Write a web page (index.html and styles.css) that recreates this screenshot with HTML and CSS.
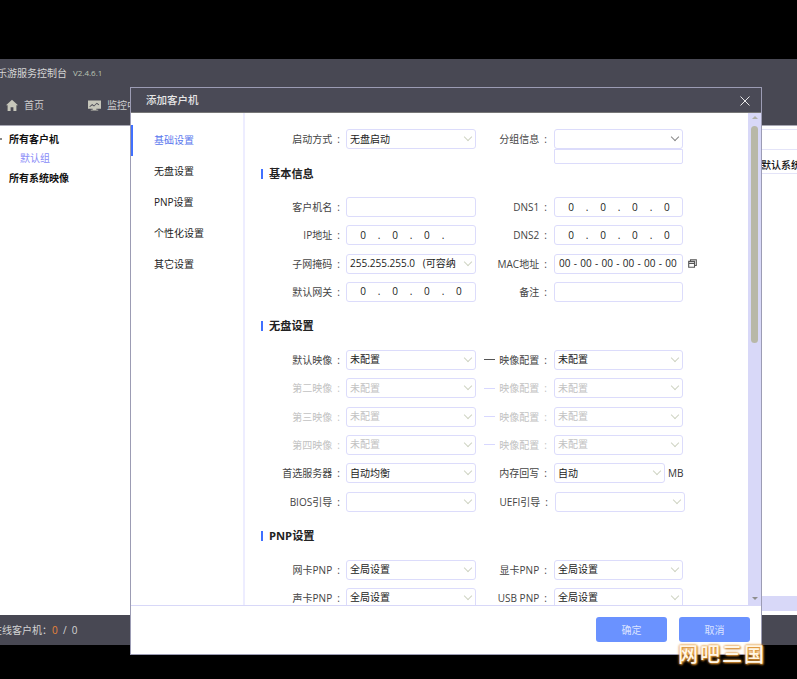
FILE: index.html
```html
<!DOCTYPE html>
<html lang="zh">
<head>
<meta charset="utf-8">
<title>乐游服务控制台</title>
<link rel="stylesheet" href="styles.css">
</head>
<body>
<div class="app">
  <div class="titlebar"><span class="app-name">乐游服务控制台</span><span class="version">V2.4.6.1</span></div>
  <nav class="nav">
    <span class="nav-item">
      <svg class="nav-icon" viewBox="0 0 12 12"><path d="M6 .8 0 6.2h1.6V12h3V8.2h2.8V12h3V6.2H12z"/></svg>首页
    </span>
    <span class="nav-item nav-second">
      <svg class="nav-icon wide" viewBox="0 0 14 11"><path fill-rule="evenodd" d="M0 0h14v9H9v1h2v1H3v-1h2V9H0zm1.5 6.5 3-2.5 2 1.5 3-3 2.5 2-.6.7-1.9-1.5-3 3-2-1.5-2.4 2z"/></svg>监控中心
    </span>
  </nav>
  <main class="work">
    <aside class="tree">
      <div class="tree-root"><span class="tree-caret"></span>所有客户机</div>
      <div class="tree-child">默认组</div>
      <div class="tree-root">所有系统映像</div>
    </aside>
    <section class="behind">
      <div class="behind-row"></div>
      <div class="behind-row tall">默认系统</div>
      <div class="behind-strip"></div>
    </section>
  </main>
  <footer class="status">在线客户机：<span class="count">0</span>&nbsp;&nbsp;/&nbsp;&nbsp;0</footer>
</div>

<div class="modal">
  <header class="modal-head">
    <span>添加客户机</span>
    <svg class="close" viewBox="0 0 10 10"><path d="M.5.5l9 9M9.5.5l-9 9"/></svg>
  </header>
  <div class="modal-body">
    <ul class="side">
      <li class="active">基础设置</li>
      <li>无盘设置</li>
      <li>PNP设置</li>
      <li>个性化设置</li>
      <li>其它设置</li>
    </ul>
    <div class="content">
      <div class="form">
        <div class="row top-row">
          <label class="lab1">启动方式&nbsp;&nbsp;:</label>
          <div class="field select w130">无盘启动</div>
          <label class="lab2">分组信息&nbsp;&nbsp;:</label>
          <div class="stack">
            <div class="field select strong w129"></div>
            <div class="field sub w129"></div>
          </div>
        </div>
        <h3 class="head first">基本信息</h3>
        <div class="row">
          <label class="lab1">客户机名&nbsp;&nbsp;:</label>
          <div class="field w130"></div>
          <label class="lab2">DNS1&nbsp;&nbsp;:</label>
          <div class="field ip w129"><i>0</i><b>.</b><i>0</i><b>.</b><i>0</i><b>.</b><i>0</i></div>
        </div>
        <div class="row">
          <label class="lab1">IP地址&nbsp;&nbsp;:</label>
          <div class="field ip w130"><i>0</i><b>.</b><i>0</i><b>.</b><i>0</i><b>.</b><i></i></div>
          <label class="lab2">DNS2&nbsp;&nbsp;:</label>
          <div class="field ip w129"><i>0</i><b>.</b><i>0</i><b>.</b><i>0</i><b>.</b><i>0</i></div>
        </div>
        <div class="row">
          <label class="lab1">子网掩码&nbsp;&nbsp;:</label>
          <div class="field select w130">255.255.255.0&nbsp;&nbsp;&nbsp;(可容纳</div>
          <label class="lab2">MAC地址&nbsp;&nbsp;:</label>
          <div class="field mac w129">00 - 00 - 00 - 00 - 00 - 00</div>
          <svg class="copy" viewBox="0 0 9 9"><path d="M2.5 2V.7h5.8v5.8H7M.7 2.4h5.8v5.9H.7zM.7 4.4h5.8"/></svg>
        </div>
        <div class="row">
          <label class="lab1">默认网关&nbsp;&nbsp;:</label>
          <div class="field ip w130"><i>0</i><b>.</b><i>0</i><b>.</b><i>0</i><b>.</b><i>0</i></div>
          <label class="lab2">备注&nbsp;&nbsp;:</label>
          <div class="field w129"></div>
        </div>
        <h3 class="head">无盘设置</h3>
        <div class="row">
          <label class="lab1">默认映像&nbsp;&nbsp;:</label>
          <div class="field select w130">未配置</div>
          <label class="lab2"><span class="dash"></span>映像配置&nbsp;&nbsp;:</label>
          <div class="field select w129">未配置</div>
        </div>
        <div class="row off">
          <label class="lab1">第二映像&nbsp;&nbsp;:</label>
          <div class="field select w130">未配置</div>
          <label class="lab2"><span class="dash"></span>映像配置&nbsp;&nbsp;:</label>
          <div class="field select w129">未配置</div>
        </div>
        <div class="row off">
          <label class="lab1">第三映像&nbsp;&nbsp;:</label>
          <div class="field select w130">未配置</div>
          <label class="lab2"><span class="dash"></span>映像配置&nbsp;&nbsp;:</label>
          <div class="field select w129">未配置</div>
        </div>
        <div class="row off">
          <label class="lab1">第四映像&nbsp;&nbsp;:</label>
          <div class="field select w130">未配置</div>
          <label class="lab2"><span class="dash"></span>映像配置&nbsp;&nbsp;:</label>
          <div class="field select w129">未配置</div>
        </div>
        <div class="row">
          <label class="lab1">首选服务器&nbsp;&nbsp;:</label>
          <div class="field select w130">自动均衡</div>
          <label class="lab2">内存回写&nbsp;&nbsp;:</label>
          <div class="field select w111">自动</div>
          <span class="unit">MB</span>
        </div>
        <div class="row">
          <label class="lab1">BIOS引导&nbsp;&nbsp;:</label>
          <div class="field select w130"></div>
          <label class="lab2 shifted">UEFI引导&nbsp;&nbsp;:</label>
          <div class="field select w130"></div>
        </div>
        <h3 class="head">PNP设置</h3>
        <div class="row">
          <label class="lab1">网卡PNP&nbsp;&nbsp;:</label>
          <div class="field select w130">全局设置</div>
          <label class="lab2">显卡PNP&nbsp;&nbsp;:</label>
          <div class="field select w129">全局设置</div>
        </div>
        <div class="row">
          <label class="lab1">声卡PNP&nbsp;&nbsp;:</label>
          <div class="field select w130">全局设置</div>
          <label class="lab2">USB PNP&nbsp;&nbsp;:</label>
          <div class="field select w129">全局设置</div>
        </div>
      </div>
      <div class="scrollbar">
        <span class="arrow up"></span>
        <span class="thumb"></span>
        <span class="arrow down"></span>
      </div>
    </div>
  </div>
  <footer class="modal-foot">
    <button class="btn">确定</button>
    <button class="btn">取消</button>
  </footer>
</div>
<div class="watermark">网吧三国</div>
</body>
</html>
```
FILE: styles.css
```css
* { box-sizing: border-box; }
html, body { margin: 0; height: 100%; }
body {
  background: #000;
  overflow: hidden;
  position: relative;
  padding-top: 59px;
  font: 10px/1.2 "Open Sans", "Noto Sans CJK SC", "Liberation Sans", sans-serif;
  color: #333;
}
.app { height: 586px; display: flex; flex-direction: column; background: #484853; }
.titlebar { height: 31px; display: flex; align-items: center; gap: 6px; margin-left: -3px; padding-bottom: 3px; color: #d5d5d5; }
.version { font-size: 8px; color: #b9c4b4; }
.nav { height: 36px; display: flex; align-items: center; padding: 0 0 5px 6px; color: #ccc; border-bottom: 1px solid #a8a8b4; }
.nav-item { display: flex; align-items: center; gap: 6px; }
.nav-second { margin-left: 44px; }
.nav-icon { width: 12px; height: 12px; fill: #c6c6ba; }
.nav-icon.wide { width: 13px; height: 11px; }
.work { flex: 1; display: flex; background: #fff; min-height: 0; }
.tree { width: 130px; padding: 3px 0 0 9px; color: #111; }
.tree-root { height: 19.5px; display: flex; align-items: center; font-weight: 700; position: relative; }
.tree-caret { position: absolute; left: -9px; top: 9px; width: 2px; height: 2px; background: #888; }
.tree-child { height: 19.5px; display: flex; align-items: center; padding-left: 11px; color: #8a8cf8; }
.behind { flex: 1; position: relative; padding: 3px 0 0 631px; color: #111; overflow: hidden; }
.behind-row { height: 21px; border-top: 1px solid #e4e4f8; border-bottom: 1px solid #e4e4f8; }
.behind-row.tall { height: 25px; margin-top: -1px; padding-top: 7px; display: flex; align-items: center; white-space: nowrap; font-weight: 500; }
.behind-strip { position: absolute; left: 631px; right: 0; bottom: 4px; height: 15px; background: #d8d8f8; }
.status { height: 30px; display: flex; align-items: center; margin-left: -8px; color: #d5d5d5; font-size: 10px; }
.count { color: #e8853a; }

.modal {
  position: absolute; left: 130px; top: 87px; width: 632px; height: 568px;
  display: flex; flex-direction: column;
  background: #fff; border: 1px solid #9c9cb4; 
}
.modal-head {
  height: 25px; flex: none; display: flex; justify-content: space-between; align-items: center;
  padding: 1px 11px 0 15px; background: #4a4a56; color: #e6e6e6; font-weight: 500; font-size: 10.5px;
  border-bottom: 1px solid #777;
}
.close { width: 10px; height: 10px; stroke: #e8e8e8; stroke-width: 1; fill: none; }
.modal-body { flex: 1; display: flex; min-height: 0; }
.side { width: 114px; flex: none; margin: 0; padding: 12px 0 0; list-style: none; border-right: 2px solid #ededff; color: #222; }
.side li { height: 31px; display: flex; align-items: center; padding: 0 0 2px 21px; border-left: 2px solid transparent; }
.side li.active { color: #5a78ee; border-left-color: #4070ff; }
.content { flex: 1; display: flex; min-width: 0; overflow: hidden; }
.form { flex: 1; padding-top: 16px; min-width: 0; }
.row { display: flex; align-items: center; height: 20px; margin-bottom: 8.33px; color: #444; }
.top-row { height: 35px; align-items: flex-start; margin-bottom: 0; }
.top-row .lab1, .top-row .lab2 { height: 20px; display: flex; align-items: center; }
.lab1 { width: 101px; flex: none; text-align: right; padding-right: 6px; justify-content: flex-end; white-space: nowrap; }
.lab2 { width: 78px; flex: none; display: flex; align-items: center; justify-content: flex-end; padding-right: 7px; white-space: nowrap; }
.lab2.shifted { width: 79px; }
.dash { width: 11px; height: 1px; background: #555; margin-right: auto; margin-left: 8px; }
.off .lab1, .off .lab2, .off .field { color: #c2c2c2; }
.off .dash { background: #d8d8ff; }
.field {
  height: 20px; flex: none; display: flex; align-items: center; position: relative;
  padding: 0 3px 1px; background: #fff; border: 1px solid #dcdcfb; border-radius: 3px; color: #222;
  white-space: nowrap; overflow: hidden;
}
.w130 { width: 130px; }
.w129 { width: 129px; }
.w111 { width: 111px; }
.select::after {
  content: ""; position: absolute; right: 4px; top: 4px; width: 5px; height: 5px;
  border-right: 1px solid #cfd4c4; border-bottom: 1px solid #cfd4c4; transform: rotate(45deg);
}
.select.strong::after { border-color: #888; }
.stack { display: flex; flex-direction: column; }
.sub { height: 15px; border-radius: 0 0 2px 2px; }
.ip { padding: 0 12px 1px 12px; justify-content: space-between; }
.w129.ip { padding-right: 11px; }
.ip i { font-style: normal; width: 8px; text-align: center; }
.ip b { font-weight: 400; }
.mac { padding: 0 0 1px 4px; font-size: 10px; word-spacing: .7px; }
.copy { width: 9px; height: 9px; margin-left: 5px; stroke: #555; stroke-width: 1.1; fill: none; }
.unit { margin-left: 3px; color: #333; }
.head {
  height: 16px; margin: 16px 0 16px 16px; padding-left: 8px; position: relative;
  display: flex; align-items: center; font-size: 11.2px; font-weight: 700; color: #222;
}
.head.first { margin-top: 2px; margin-bottom: 15px; }
.head::before { content: ""; position: absolute; left: 0; top: 3px; width: 2px; height: 10px; background: #4070ff; }
.scrollbar { width: 13px; flex: none; background: #d8d8f8; position: relative; padding: 13px 3px 0; }
.thumb { display: block; height: 217px; background: #b8b8a8; border-radius: 4px; }
.arrow { position: absolute; left: 3.5px; width: 0; height: 0; border-left: 3px solid transparent; border-right: 3px solid transparent; }
.arrow.up { top: 3px; border-bottom: 3px solid #b0b0a8; }
.arrow.down { bottom: 5px; border-top: 3px solid #8e8e8e; }
.modal-foot {
  height: 49px; flex: none; display: flex; justify-content: flex-end; gap: 12px;
  padding: 11px 11px 0 0; border-top: 1px solid #d8d8f8;
}
.btn {
  width: 71px; height: 25px; padding: 0; border: 0; border-radius: 3px;
  background: #6a92ff; color: #dbe3ff; font: inherit;
}
.watermark {
  position: absolute; left: 678px; top: 644px; font-size: 20px; line-height: 22px; letter-spacing: 2px;
  font-weight: 500; color: #fff6e6; white-space: nowrap;
  text-shadow: 0 0 2px #e8a040, 0 0 3px #e09030, 1px 1px 2px #c07820;
}
```
